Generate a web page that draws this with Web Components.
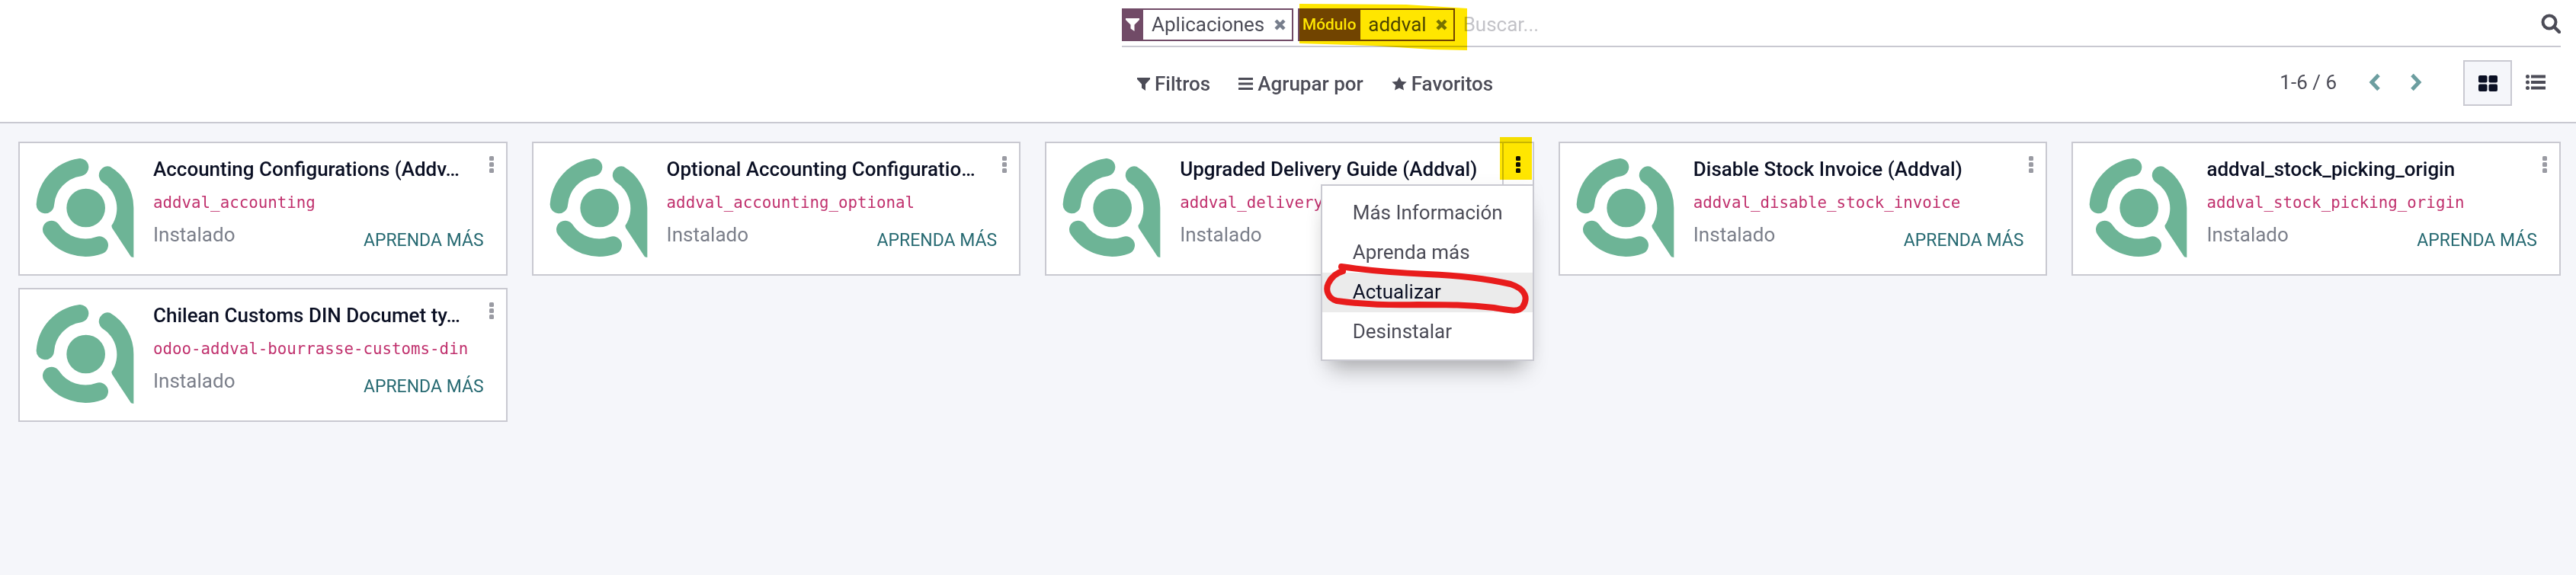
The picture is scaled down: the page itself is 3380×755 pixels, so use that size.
<!DOCTYPE html>
<html lang="es"><head><meta charset="utf-8"><title>Aplicaciones</title>
<style>
html,body{margin:0;padding:0;height:100%;background:#f5f6fa;font-family:Roboto,"Liberation Sans",sans-serif;color:#4c4c57;overflow:hidden}
</style></head><body>
<x-app>
  <x-control-panel slot="top"></x-control-panel>
  <x-card-grid slot="main">
    <x-app-card name="Accounting Configurations (Addv…" tech="addval_accounting"></x-app-card>
    <x-app-card name="Optional Accounting Configuratio…" tech="addval_accounting_optional"></x-app-card>
    <x-app-card name="Upgraded Delivery Guide (Addval)" tech="addval_delivery" open></x-app-card>
    <x-app-card name="Disable Stock Invoice (Addval)" tech="addval_disable_stock_invoice"></x-app-card>
    <x-app-card name="addval_stock_picking_origin" tech="addval_stock_picking_origin"></x-app-card>
    <x-app-card name="Chilean Customs DIN Documet ty…" tech="odoo-addval-bourrasse-customs-din"></x-app-card>
  </x-card-grid>
  <x-highlights slot="over"></x-highlights>
  <x-annotations slot="over"></x-annotations>
</x-app>
<script>
const def=(name,html,init)=>customElements.define(name,class extends HTMLElement{
  constructor(){super();this.attachShadow({mode:'open'});}
  connectedCallback(){this.shadowRoot.innerHTML=typeof html==='function'?html(this):html;}
});
const X=`<svg width="15" height="15" viewBox="0 0 15 15"><path d="M2 2l11 11M13 2L2 13" stroke="currentColor" stroke-width="4.4"/></svg>`;

def('x-app',`<style>:host{display:block;position:relative;width:3380px;height:755px;overflow:hidden;background:#f5f6fa}</style>
<slot name="top"></slot><slot name="main"></slot><slot name="over"></slot>`);

def('x-facet',h=>`<style>
:host{display:inline-flex;height:43px;box-sizing:border-box;border:2px solid #714b67;border-left:0;background:#fff;align-items:center;font-size:26px;color:#4c4c57;line-height:1}
.l{align-self:stretch;margin-top:-2px;margin-bottom:-2px;background:#714b67;color:#fff;display:flex;align-items:center;justify-content:center;font-size:${h.hasAttribute('label')?'20.8px':'26px'};font-weight:500;width:${h.hasAttribute('label')?'82px':'28px'}}
.v{padding:0 0 0 ${h.getAttribute('pad')||'11'}px;margin-top:-2px}
.x{display:flex;color:#777e8c;padding:0 ${h.getAttribute('xr')||'10'}px 0 12.500px}
</style><span class="l"><slot name="icon"></slot>${h.getAttribute('label')||''}</span><span class="v"><slot></slot></span><span class="x">${X}</span>`);

def('x-tool-btn',`<style>:host{display:inline-flex;align-items:center;gap:6px;font-size:26px;font-weight:500;color:#4c4c57;line-height:1}</style><slot name="i"></slot><slot></slot>`);

def('x-control-panel',`<style>
:host{display:grid;grid-template-columns:1472px 1fr;height:162px;box-sizing:border-box;background:#fff;border-bottom:2px solid #c9c9d1}
.s{grid-column:2;margin-right:20px;display:flex;flex-direction:column}
.search{height:62px;box-sizing:border-box;border-bottom:2px solid #c9c9d1;display:flex;align-items:flex-start;padding-top:11px;gap:6px}
.ph{font-size:26px;color:#c3c3c8;line-height:43px;margin-left:4.500px;flex:1}
.mag{align-self:center;margin:-10px 0 0;display:flex}
.row{display:flex;align-items:center;height:96px;padding:0 20px 6px 20px}
.tools{display:flex;gap:37px;flex:1}
.pg{font-size:26px;color:#4c4c57;margin-top:-4px}
.nav{display:flex;gap:38px;margin:-5px 54px 0 42px;align-items:center}
.sw{display:flex;align-items:center;margin-right:0}
.k{width:64px;height:60px;box-sizing:border-box;border:2px solid #c9c9d1;background:#f5f6fa;display:flex;align-items:center;justify-content:center;margin-top:-2px}
.li{width:26px;margin:-4px 0 0 18px;display:flex}
</style>
<div class="s">
 <div class="search">
  <x-facet pad="11" xr="8.500"><svg slot="icon" width="18" height="17" viewBox="0 0 18 17"><path d="M0 0h18v2L11.500 8.500V17L6.500 13.500V8.500L0 2z" fill="#fff"/></svg>Aplicaciones</x-facet>
  <x-facet label="Módulo" pad="10" xr="8">addval</x-facet>
  <span class="ph">Buscar...</span>
  <span class="mag"><svg width="26" height="26" viewBox="0 0 26 26"><circle cx="11" cy="11" r="8.500" fill="none" stroke="#4c4c57" stroke-width="4"/><path d="M17 17l7 7" stroke="#4c4c57" stroke-width="4.400" stroke-linecap="round"/></svg></span>
 </div>
 <div class="row">
  <div class="tools">
   <x-tool-btn><svg slot="i" width="17" height="17" viewBox="0 0 17 17"><path d="M0 0h17v2L11 8.500V17L6 13.500V8.500L0 2z" fill="#4c4c57"/></svg>Filtros</x-tool-btn>
   <x-tool-btn><svg slot="i" width="19" height="16" viewBox="0 0 19 16"><path d="M0 1.500h19M0 8h19M0 14.500h19" stroke="#4c4c57" stroke-width="3"/></svg>Agrupar por</x-tool-btn>
   <x-tool-btn><svg slot="i" width="20" height="18" viewBox="0 0 20 18"><path d="M10 0l2.900 5.700 6.800.8-5 4.400 1.300 6.600L10 14.500l-6 3 1.300-6.600-5-4.400 6.800-.8z" fill="#4c4c57"/></svg>Favoritos</x-tool-btn>
  </div>
  <span class="pg">1-6 / 6</span>
  <span class="nav">
   <svg width="16" height="24" viewBox="0 0 16 24"><path d="M13 2.500L4 12l9 9.500" fill="none" stroke="#6c9ea0" stroke-width="5"/></svg>
   <svg width="16" height="24" viewBox="0 0 16 24"><path d="M3 2.500L12 12l-9 9.500" fill="none" stroke="#6c9ea0" stroke-width="5"/></svg>
  </span>
  <span class="sw">
   <span class="k"><svg width="25" height="21" viewBox="0 0 25 21" fill="#0b1024"><rect width="11.500" height="9.500" rx="2"/><rect x="13.500" width="11.500" height="9.500" rx="2"/><rect y="11.500" width="11.500" height="9.500" rx="2"/><rect x="13.500" y="11.500" width="11.500" height="9.500" rx="2"/></svg></span>
   <span class="li"><svg width="26" height="20" viewBox="0 0 26 20" fill="#4c4c57"><circle cx="2.500" cy="2.500" r="2.500"/><circle cx="2.500" cy="10" r="2.500"/><circle cx="2.500" cy="17.500" r="2.500"/><rect x="7" y="0.500" width="19" height="4"/><rect x="7" y="8" width="19" height="4"/><rect x="7" y="15.500" width="19" height="4"/></svg></span>
  </span>
 </div>
</div>`);

def('x-card-grid',`<style>:host{display:grid;grid-template-columns:repeat(5,1fr);column-gap:32px;row-gap:16px;padding:24px 20px 0 24px;align-items:start}</style><slot></slot>`);

def('x-logo',`<style>:host{display:block;width:130px;height:130px;flex:none}</style>
<svg width="130" height="130" viewBox="80 40 390 390" fill="#6db496">
<circle cx="277" cy="235" r="76"/>
<path d="M117 222A160 160 0 0 1 253 75M142 320A160 160 0 0 0 330 382" fill="none" stroke="#6db496" stroke-width="70" stroke-linecap="round"/>
<path d="M340 132A122 122 0 0 1 378 305L380 314L455 428L465 430V235A188 188 0 0 0 372 72A35 35 0 0 0 340 132Z"/>
</svg>`);

def('x-app-card',h=>`<style>
:host{display:block;position:relative;height:176px;box-sizing:border-box;background:#fff;border:2px solid #c9c9d1;${h.hasAttribute('open')?'z-index:2;':''}}
.in{display:flex;height:100%;padding:20px 0 0 21px;box-sizing:border-box}
x-logo{margin-right:24px}
.b{flex:1;min-width:0;position:relative}
.t{font-size:26px;font-weight:500;color:#0b1024;line-height:32px;white-space:nowrap;margin-top:-2px}
.c{font-family:"DejaVu Sans Mono",monospace;font-size:20.800px;color:#c0306d;line-height:30px;margin-top:13px;white-space:nowrap}
.st{font-size:26px;color:#7b7f8a;line-height:32px;margin-top:11px}
.a{position:absolute;right:29px;top:93px;font-size:23px;color:#276a72;line-height:30px}
.kb{position:absolute;right:16px;top:17px;display:flex}
</style><div class="in"><x-logo></x-logo><div class="b">
<div class="t">${h.getAttribute('name')}</div>
<div class="c">${h.getAttribute('tech')}</div>
<div class="st">Instalado</div>
${h.hasAttribute('open')?'':'<div class="a">APRENDA MÁS</div>'}
</div></div>
<svg class="kb" width="6" height="22" viewBox="0 0 6 22" fill="${h.hasAttribute('open')?'#111':'#9a9ba3'}"><rect width="6" height="6" rx="1.500"/><rect y="8" width="6" height="6" rx="1.500"/><rect y="16" width="6" height="6" rx="1.500"/></svg>
${h.hasAttribute('open')?'<x-app-menu></x-app-menu>':''}`);

def('x-app-menu',`<style>
:host{position:absolute;left:359.500px;top:54px;width:280px;height:232px;box-sizing:border-box;background:#fff;border:2px solid #c9c9d1;box-shadow:0 22px 28px -12px rgba(0,0,0,.3),0 0 20px rgba(0,0,0,.04);padding:10px 0 0;font-size:26px;color:#4c4c57;display:block}
:host::before{content:"";position:absolute;right:38px;top:-56px;height:54px;border-right:2px solid #c9c9d1}
.i{height:52px;line-height:50px;padding-left:40px}
.on{background:#ebebeb;color:#0b1024}
</style><div class="i">Más Información</div><div class="i">Aprenda más</div><div class="i on">Actualizar</div><div class="i">Desinstalar</div>`);

def('x-highlights',`<style>:host{display:block;position:absolute;left:0;top:0;width:3380px;height:755px;pointer-events:none;z-index:5;mix-blend-mode:multiply}svg{display:block}</style>
<svg width="3380" height="755" viewBox="0 0 3380 755" fill="#ffe600">
<path d="M1705 5L1845 6L1925 11V66L1880 65L1800 60L1705 57Z"/>
<path d="M1968 180H2010V236H1968Z"/>
</svg>`);

def('x-annotations',`<style>:host{display:block;position:absolute;left:0;top:0;width:3380px;height:755px;pointer-events:none;z-index:6}svg{display:block}</style>
<svg width="3380" height="755" viewBox="0 0 3380 755">
<path d="M1760 350C1800 356 1830 358 1873 360C1920 362 1955 367 1982 373C2003 380 2005 392 1998 403C1992 410 1985 408 1960 404C1925 400 1900 400 1860 400C1820 401 1790 400 1754 395C1742 392 1739 380 1743 372C1748 362 1754 358 1762 356" fill="none" stroke="#e81c1c" stroke-width="8" stroke-linecap="round" stroke-linejoin="round"/>
</svg>`);
</script>
</body></html>
